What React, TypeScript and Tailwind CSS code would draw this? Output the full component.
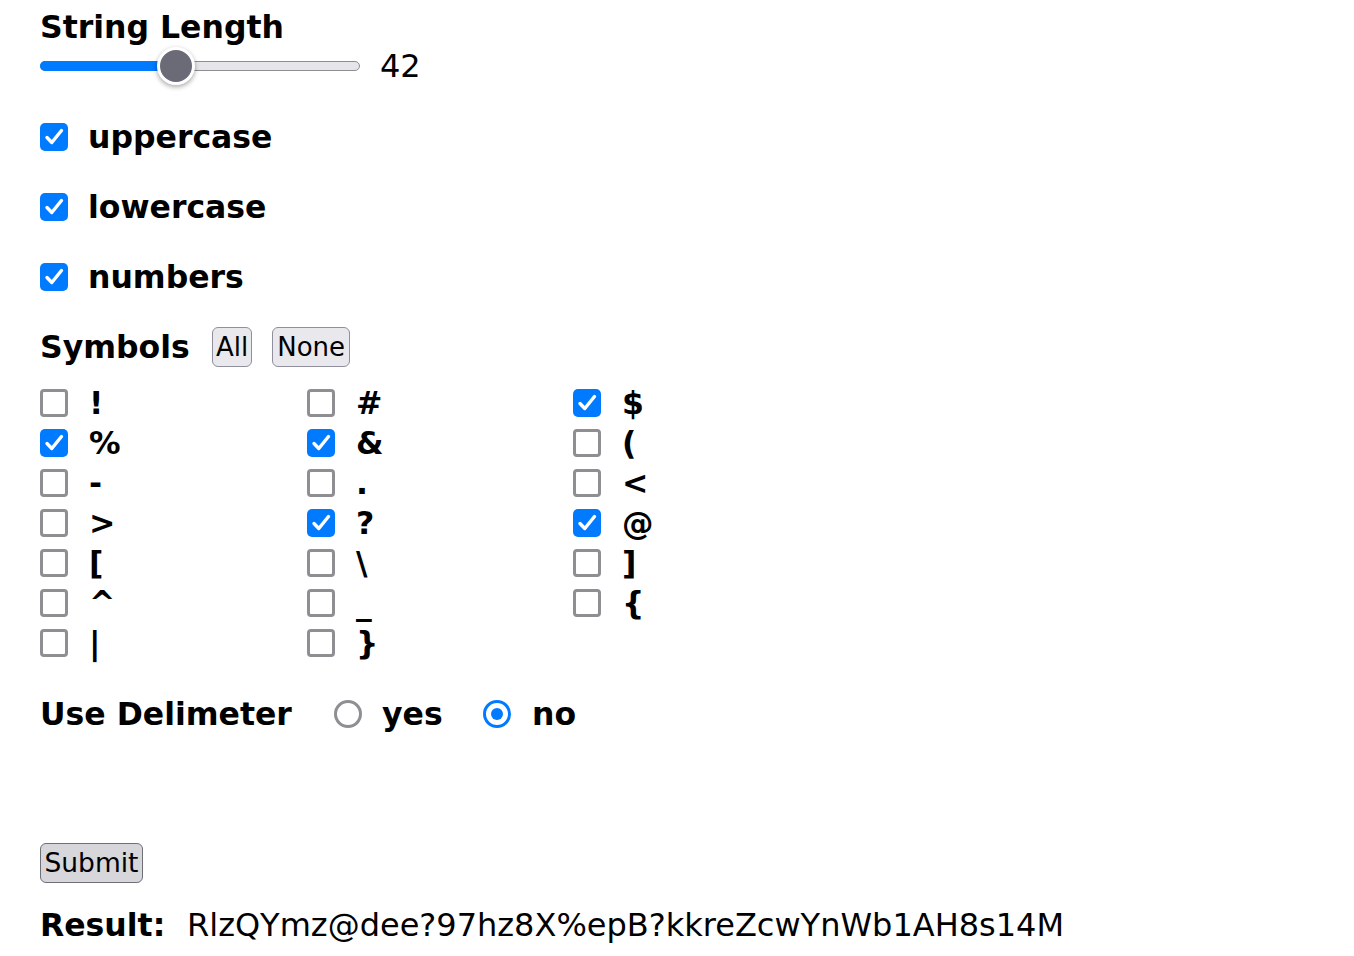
import { useState } from "react"

const symbols = ["!", "#", "$", "%", "&", "(", "-", ".", "<", ">", "?", "@", "[", "\\", "]", "^", "_", "{", "|", "}"]
const initiallyOn = ["$", "%", "&", "?", "@"]

function Box({ checked, onClick }: { checked: boolean; onClick?: () => void }) {
  if (checked) {
    return (
      <span onClick={onClick} className="flex h-[28px] w-[28px] shrink-0 items-center justify-center rounded-[5px] bg-[#007aff]">
        <svg width="28" height="28" viewBox="0 0 28 28" fill="none">
          <path d="M7 14.5 L11.8 19.5 L21.5 7.5" stroke="white" strokeWidth="3.4" strokeLinecap="round" strokeLinejoin="round" />
        </svg>
      </span>
    )
  }
  return <span onClick={onClick} className="h-[28px] w-[28px] shrink-0 rounded-[4px] border-[3px] border-[#8e8e93] bg-white" />
}

function Radio({ checked }: { checked: boolean }) {
  if (checked) {
    return (
      <span className="flex h-[28px] w-[28px] shrink-0 items-center justify-center rounded-full border-[3px] border-[#007aff] bg-white">
        <span className="h-[12px] w-[12px] rounded-full bg-[#007aff]" />
      </span>
    )
  }
  return <span className="h-[28px] w-[28px] shrink-0 rounded-full border-[3px] border-[#8e8e93] bg-white" />
}

export default function App() {
  const [on, setOn] = useState<string[]>(initiallyOn)
  const toggle = (s: string) => setOn(on.includes(s) ? on.filter((x) => x !== s) : [...on, s])

  return (
    <div className="min-h-screen bg-white pl-10 font-['DejaVu_Sans',sans-serif] text-black">
      <div className="flex h-[54px] items-center text-[31.5px] font-bold leading-[36px]">String Length</div>

      {/* slider */}
      <div className="flex h-[24px] items-center">
        <div className="relative h-[10px] w-[320px]">
          <div className="absolute inset-0 rounded-full border border-[#8e8e93] bg-[#e5e5ea]" />
          <div className="absolute inset-y-0 left-0 w-[140px] rounded-full bg-[#007aff]" />
          <div className="absolute left-[117px] top-[-14px] h-[38px] w-[38px] rounded-full border-[3px] border-white bg-[#6b6b78] shadow-[0_2px_5px_rgba(0,0,0,0.35)]" />
        </div>
        <span className="ml-[20px] text-[32px] leading-[36px]">42</span>
      </div>

      <div className="mt-[24px]">
        {["uppercase", "lowercase", "numbers"].map((label) => (
          <div key={label} className="flex h-[70px] items-center gap-[20px]">
            <Box checked />
            <span className="text-[31.5px] font-bold leading-[36px]">{label}</span>
          </div>
        ))}
      </div>

      <div className="flex h-[70px] items-center">
        <span className="w-[172px] text-[31.5px] font-bold leading-[36px]">Symbols</span>
        <button className="h-[40px] rounded-[6px] border-[1.5px] border-[#8f8f9d] bg-[#e9e9ed] px-[3px] text-[26px] leading-[30px]">All</button>
        <button className="ml-[20px] h-[40px] rounded-[6px] border-[1.5px] border-[#8f8f9d] bg-[#e9e9ed] px-[4px] text-[26px] leading-[30px]">None</button>
      </div>

      <div className="mt-px grid grid-cols-[267px_266px_auto]">
        {symbols.map((s) => (
          <div key={s} className="flex h-[40px] items-center gap-[21px]">
            <Box checked={on.includes(s)} onClick={() => toggle(s)} />
            <span className="text-[31.5px] font-bold leading-[36px]">{s}</span>
          </div>
        ))}
      </div>

      <div className="mt-[21px] flex h-[60px] items-center">
        <span className="w-[294px] text-[31.5px] font-bold leading-[36px]">Use Delimeter</span>
        <Radio checked={false} />
        <span className="ml-[20px] w-[101px] text-[31.5px] font-bold leading-[36px]">yes</span>
        <Radio checked />
        <span className="ml-[21px] text-[31.5px] font-bold leading-[36px]">no</span>
      </div>

      <div className="mt-[99px]">
        <button className="h-[40px] w-[103px] rounded-[6px] border-[1.5px] border-[#6f6f78] bg-[#d6d6db] text-[26.5px] leading-[30px]">Submit</button>
      </div>

      <div className="mt-[22px] flex h-[40px] items-center leading-[36px]">
        <span className="w-[147px] text-[31.5px] font-bold">Result:</span>
        <span className="text-[32px]">RlzQYmz@dee?97hz8X%epB?kkreZcwYnWb1AH8s14M</span>
      </div>
    </div>
  )
}
